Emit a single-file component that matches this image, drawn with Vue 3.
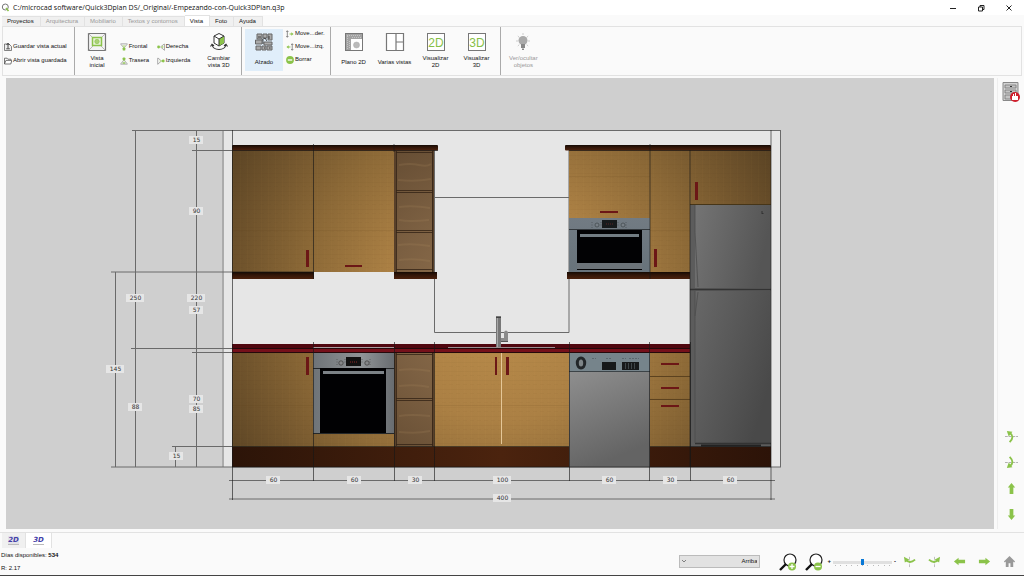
<script setup>
import { ref } from 'vue'

const tabs = [
  { name: 'Proyectos' },
  { name: 'Arquitectura', dim: true },
  { name: 'Mobiliario', dim: true },
  { name: 'Textos y contornos', dim: true },
  { name: 'Vista' },
  { name: 'Foto' },
  { name: 'Ayuda' },
]
const activeTab = ref('Vista')
const viewMode = ref('3D')
const direction = ref('Arriba')
const zoomLevel = ref(50)

const uprights = [313, 394, 434, 569, 649, 690]
const labels = [
  [196, 140, '15'], [196, 211, '90'], [135, 298, '250'], [196, 298, '220'], [196, 310, '57'],
  [115, 369, '145'], [135, 407, '88'], [196, 399, '70'], [196, 409, '85'], [176, 456, '15'],
  [273, 480, '60'], [354, 480, '60'], [415, 480, '30'], [502, 480, '100'], [609, 480, '60'],
  [670, 480, '30'], [730, 480, '60'], [502, 498, '400'],
]
const woods = [
  [232, 150, 81, 122], [313, 150, 81, 122], [569, 150, 81, 68], [650, 150, 40, 122], [690, 150, 81, 55],
  [232, 352, 81, 95], [313, 352, 81, 95], [434, 352, 135, 95], [650, 352, 40, 95],
]
const handles = [
  [306, 250, 3, 17], [345, 265, 17, 2], [600, 211, 18, 2], [654, 249, 3, 18], [695, 182, 3, 18],
  [306, 357, 3, 18], [495, 357, 2, 18], [506, 357, 3, 18],
  [661, 363, 18, 2], [661, 387, 18, 2], [661, 405, 18, 2],
]
</script>

<template>
  <div class="app">
    <header class="title">
      <svg class="logo" viewBox="0 0 9 9"><circle cx="4.3" cy="4" r="3" fill="none" stroke="#777" stroke-width="1" /><path d="M5 5l2.5 3" stroke="#8bc34a" stroke-width="1.6" /></svg>
      <h1>C:/microcad software/Quick3Dplan DS/_Original/-Empezando-con-Quick3DPlan.q3p</h1>
      <div class="window">
        <button aria-label="Minimizar"><svg viewBox="0 0 8 8"><path d="M1 4.5h6" /></svg></button>
        <button aria-label="Restaurar"><svg viewBox="0 0 8 8"><path d="M1.5 3h4v4h-4zM3 3V1.500h4v4H5.500" /></svg></button>
        <button aria-label="Cerrar"><svg viewBox="0 0 8 8"><path d="M1.500 1.500l5 5M6.500 1.500l-5 5" /></svg></button>
      </div>
    </header>

    <nav class="tabs">
      <button v-for="t in tabs" :key="t.name" :class="{ dim: t.dim, on: activeTab === t.name }" @click="activeTab = t.name">{{ t.name }}</button>
    </nav>

    <section class="ribbon">
      <div class="group files">
        <button class="row">
          <svg viewBox="0 0 8 8"><path d="M.5 1v6.500h7V3.500L5 1z" fill="#eee" stroke="#666" stroke-width=".8" /><path d="M4 .3v5M2.500 2l1.500-1.700L5.500 2M2.300 5.800h3.500" fill="none" stroke="#333" stroke-width=".9" /></svg>
          Guardar vista actual
        </button>
        <button class="row">
          <svg viewBox="0 0 8 8"><path d="M.5 7V1.200h2.600l.8 1h3v1.200M.5 7l1.400-3.600h5.900L6.800 7z" fill="#fff" stroke="#555" stroke-width=".8" /></svg>
          Abrir vista guardada
        </button>
      </div>

      <div class="group views">
        <button class="big">
          <svg viewBox="0 0 20 20"><path d="M1.500 1.500h17v17h-17z" fill="#f4f4f4" stroke="#777" stroke-width="1.200" /><path d="M1.500 1.500L6 6M18.500 1.500L14 6M1.500 18.500L6 14M18.500 18.500L14 14" stroke="#aaa" stroke-width=".8" /><rect x="5.500" y="5.500" width="9" height="8" fill="#e9f3da" stroke="#8bc34a" stroke-width="1.500" /><circle cx="10" cy="9.500" r="2.200" fill="#a9d275" stroke="#8bc34a" stroke-width=".6" /></svg>
          <span>Vista<br>inicial</span>
        </button>
        <div class="quad">
          <button class="row">
            <svg viewBox="0 0 9 9"><path d="M.5 1h8M1 1.500L4 5h1l3-3.500" fill="none" stroke="#888" stroke-width=".8" /><path d="M2.500 2.500h4L5 5H4z" fill="#c6e29f" /><rect x="3" y="5" width="3" height="3.500" rx="1" fill="#8bc34a" /></svg>Frontal
          </button>
          <button class="row">
            <svg viewBox="0 0 9 9"><circle cx="1.800" cy="4.500" r="1.600" fill="#8bc34a" /><path d="M8.500 1v7.500M8 1.200L4 4.500l4 3.300" fill="none" stroke="#888" stroke-width=".8" /><circle cx="6" cy="4.500" r="1.300" fill="#b9d98d" /></svg>Derecha
          </button>
          <button class="row">
            <svg viewBox="0 0 9 9"><path d="M.5 8h8M1 7.500L4 4h1l3 3.500" fill="none" stroke="#888" stroke-width=".8" /><rect x="3" y=".5" width="3" height="3.500" rx="1" fill="#8bc34a" /><path d="M3 6h3v1.500H3z" fill="#8bc34a" /></svg>Trasera
          </button>
          <button class="row">
            <svg viewBox="0 0 9 9"><path d="M.8 1v7.500M1.200 1.200L5 4.500 1.200 7.800" fill="none" stroke="#888" stroke-width=".8" /><path d="M3 4.500h3" stroke="#b9d98d" stroke-width="1.500" /><circle cx="7" cy="4.500" r="1.600" fill="#8bc34a" /></svg>Izquierda
          </button>
        </div>
        <button class="big">
          <svg viewBox="0 0 20 20"><path d="M10 1.500l5 2.500v7l-5 3-5-3V4z" fill="#fff" stroke="#333" stroke-width="1" /><path d="M10 7L15 4v7l-5 3z" fill="#8bc34a" /><path d="M5 4l5 3 5-3M10 7v7" fill="none" stroke="#333" stroke-width="1" /><path d="M3 12.500q1 5 7 5t7-5M1.500 14.500L3 12.300l2 1.500M18.500 14.500L17 12.300l-2 1.500" fill="none" stroke="#333" stroke-width="1.100" /></svg>
          <span>Cambiar<br>vista 3D</span>
        </button>
      </div>

      <div class="group elevation">
        <button class="big chosen">
          <svg viewBox="0 0 20 20"><path d="M3 2h5v5H3zM9 2h4v4H9zM14 2h4v6h-4zM1.500 8H8v4H1.500zM10 10h8v3h-8zM2 14h5v4H2zM8 14h4v4H8zM13 14h5v4h-5z" fill="#aaa" stroke="#666" stroke-width="1" /><path d="M8 8l3-2 2 3M4 5h3M15 4v3M10 16h1M15 16h1.500M9 12V8" fill="none" stroke="#333" stroke-width=".9" /></svg>
          <span>Alzado</span>
        </button>
        <div class="stack">
          <button class="row"><svg viewBox="0 0 9 9"><path d="M1.500 1v7M.3 2.200L1.500.8l1.200 1.400M.3 6.800l1.200 1.400 1.200-1.400" fill="none" stroke="#666" stroke-width=".8" /><path d="M4 4h2V2.500l2.500 2L6 6.500V5H4z" fill="#8bc34a" /></svg>Move...der.</button>
          <button class="row"><svg viewBox="0 0 9 9"><path d="M7 1v7M5.800 2.200L7 .8l1.200 1.400M5.800 6.800L7 8.200l1.200-1.400" fill="none" stroke="#666" stroke-width=".8" /><path d="M5 4H3V2.500l-2.500 2L3 6.500V5h2z" fill="#8bc34a" /></svg>Move...izq.</button>
          <button class="row"><svg viewBox="0 0 9 9"><circle cx="4.500" cy="4.500" r="4.400" fill="#8bc34a" /><path d="M2 4.500h5" stroke="#fff" stroke-width="1.500" /></svg>Borrar</button>
        </div>
      </div>

      <div class="group plans">
        <button class="big">
          <svg viewBox="0 0 20 20"><rect x="1.500" y="1.500" width="17" height="17" fill="#fff" stroke="#777" /><path d="M2 2h16v5H7v11H2z" fill="#a2a2a2" /><path d="M3 3.500h14M3.500 4v13M5.500 9v8M8 5.500h9" stroke="#c4c4c4" stroke-dasharray="1 1" /><circle cx="12.500" cy="13" r="3" fill="#bbb" stroke="#aaa" stroke-width=".5" /></svg>
          <span>Plano 2D</span>
        </button>
        <button class="big">
          <svg viewBox="0 0 20 20"><path d="M1.500 1.500h17v17h-17zM11 1.500v17M11 10h7.500" fill="#fff" stroke="#777" stroke-width="1.200" /></svg>
          <span>Varias vistas</span>
        </button>
        <button class="big">
          <svg viewBox="0 0 20 20"><rect x="1.500" y="1.500" width="17" height="17" fill="#fff" stroke="#777" /><text x="10" y="14.500" text-anchor="middle" class="glyph">2D</text></svg>
          <span>Visualizar<br>2D</span>
        </button>
        <button class="big">
          <svg viewBox="0 0 20 20"><rect x="1.500" y="1.500" width="17" height="17" fill="#fff" stroke="#777" /><text x="10" y="14.500" text-anchor="middle" class="glyph">3D</text></svg>
          <span>Visualizar<br>3D</span>
        </button>
      </div>

      <div class="group objects">
        <button class="big faded">
          <svg viewBox="0 0 20 20"><circle cx="10" cy="8.500" r="4.500" fill="#aaa" /><path d="M8 12h4v4H8zM9 16.500h2v1.500H9z" fill="#888" /><path d="M10 1v2M3 9h2M15 9h2M4.800 4l1.500 1.400M15.200 4l-1.500 1.400M4.800 14l1.500-1.400M15.200 14l-1.500-1.400" stroke="#ccc" /></svg>
          <span>Ver/ocultar<br>objetos</span>
        </button>
      </div>
    </section>

    <main class="work">
      <div class="canvas">
        <svg class="scene" viewBox="6 78 988 451" role="img" aria-label="Alzado de la cocina">
          <defs>
            <radialGradient id="wood" gradientUnits="userSpaceOnUse" cx="501" cy="305" r="330">
              <stop offset="0" stop-color="#bb8d4b" /><stop offset=".35" stop-color="#ab8044" /><stop offset=".6" stop-color="#8c6937" /><stop offset="1" stop-color="#523d21" />
            </radialGradient>
            <radialGradient id="shelf" gradientUnits="userSpaceOnUse" cx="501" cy="305" r="220">
              <stop offset="0" stop-color="#967551" /><stop offset=".5" stop-color="#7c6042" /><stop offset="1" stop-color="#5c452d" />
            </radialGradient>
            <linearGradient id="trim" x2="0" y2="1"><stop offset="0" stop-color="#150a04" /><stop offset=".4" stop-color="#301508" /><stop offset="1" stop-color="#4b210d" /></linearGradient>
            <linearGradient id="kick" gradientUnits="userSpaceOnUse" x1="232" x2="771" y1="0" y2="0"><stop offset="0" stop-color="#2c1408" /><stop offset=".5" stop-color="#4b230e" /><stop offset="1" stop-color="#2c1308" /></linearGradient>
            <linearGradient id="steel"><stop offset="0" stop-color="#6e7377" /><stop offset=".6" stop-color="#909497" /><stop offset="1" stop-color="#686c70" /></linearGradient>
            <linearGradient id="oven" x2="0" y2="1"><stop offset="0" stop-color="#727b83" /><stop offset="1" stop-color="#68737b" /></linearGradient>
            <linearGradient id="washer" x2=".3" y2="1"><stop offset="0" stop-color="#969696" /><stop offset="1" stop-color="#646464" /></linearGradient>
            <linearGradient id="fridge" x2="1" y2=".25"><stop offset="0" stop-color="#747474" /><stop offset="1" stop-color="#555" /></linearGradient>
            <linearGradient id="fridgelow" x2="1" y2=".6"><stop offset="0" stop-color="#686868" /><stop offset="1" stop-color="#494949" /></linearGradient>
            <pattern id="grain" width="7" height="9" patternUnits="userSpaceOnUse"><path d="M0 2.500h7M1 6.500h4" stroke="#4a300f" stroke-opacity=".03" /><path d="M2.500 0v9" stroke="#f4c878" stroke-opacity=".02" /></pattern>
          </defs>

          <rect x="224" y="130" width="557" height="337" fill="#e6e6e6" />
          <rect x="222" y="130" width="2" height="337" fill="#ababab" />

          <g stroke="#6a6a6a" fill="none">
            <path d="M132 130.500h649M192 150.500h40M111 272h121M131 348.500h101M192 352.500h40M172 446.500h60M111 467h670" />
            <path d="M115.500 272v195M135.500 130v337M196.500 130v337M175.500 447v20" />
            <path d="M229 480.500h546M229 499h546M434 197.500h135M434.500 150v182.500h134.500V150M780.500 130v337" />
          </g>

          <g v-for="(w, i) in woods" :key="'w' + i">
            <rect :x="w[0]" :y="w[1]" :width="w[2]" :height="w[3]" fill="url(#wood)" />
            <rect :x="w[0]" :y="w[1]" :width="w[2]" :height="w[3]" fill="url(#grain)" />
          </g>
          <path d="M232 230.500h162M569 176.500h81M650 230.500h40M232 405.500h81M434 405.500h135" stroke="#5a3b14" stroke-opacity=".1" />

          <g>
            <rect x="394" y="150" width="40" height="122" fill="url(#shelf)" />
            <rect x="394" y="352" width="40" height="95" fill="url(#shelf)" />
            <path d="M395 150v122M433 150v122M395 352v95M433 352v95" stroke="#58402a" stroke-width="2" />
            <path d="M396.500 151v121M432.500 151v121M396 152.500h37M396 190.500h37M396 192.500h37M396 230.500h37M396 232.500h37M396 269.500h37M396.500 353v93M432.500 353v93M396 354.500h37M396 398.500h37M396 400.500h37M396 444.500h37" stroke="#332315" fill="none" stroke-width=".8" />
            <path d="M399 165q12-2 20 0t12-1M398 180q18 2 33-1M399 207q14-2 31 1M399 220q10 2 30 0M398 245q14-2 32 1M399 260q15-2 31 1M399 370q15-2 31 1M399 386q18-2 30 1M399 416q12-2 31 0M399 432q18 2 31-1" fill="none" stroke="#b08e62" stroke-opacity=".18" stroke-width="2" />
          </g>

          <rect x="232" y="145" width="206" height="5.500" rx="1" fill="url(#trim)" />
          <rect x="565" y="145" width="206" height="5.500" rx="1" fill="url(#trim)" />
          <path d="M232 272h82v7h-82zM394 272h43v7h-43zM567 272h123v7H567z" fill="url(#trim)" />
          <rect x="232" y="447" width="539" height="20" fill="url(#kick)" />

          <g>
            <rect x="569" y="218" width="81" height="54" fill="url(#oven)" />
            <path d="M569 229.500h81" stroke="#33383c" />
            <rect x="577" y="230" width="65" height="40" fill="#020204" />
            <rect x="577" y="263" width="65" height="6" fill="#6d747a" />
            <rect x="580" y="234" width="59" height="3" fill="#727c83" />
            <rect x="602" y="220" width="15" height="8" fill="#171a1c" />
            <path d="M606 224h7" stroke="#5b2424" stroke-dasharray="1 1" />
            <g fill="#777f86" stroke="#454c51" stroke-width=".8"><circle cx="597" cy="225" r="2" /><circle cx="623" cy="225" r="2" /></g>
            <path d="M592 222v6M601 222v5M618 222v5M626 222v6" stroke="#3f464a" stroke-width=".6" stroke-dasharray="1 1.500" />
          </g>

          <g>
            <rect x="313" y="352" width="81" height="82" fill="url(#steel)" />
            <path d="M313 368.500h81M313 433.500h81" stroke="#25282a" />
            <rect x="320" y="368" width="66" height="65" fill="#010103" />
            <rect x="323" y="371" width="61" height="3" fill="#7c8287" />
            <rect x="346" y="357" width="15" height="9" fill="#111" />
            <path d="M350 362h7" stroke="#8c2929" stroke-dasharray="1 1" />
            <g fill="#858789" stroke="#444" stroke-width=".8"><circle cx="341" cy="363" r="2.200" /><circle cx="367" cy="363" r="2.200" /></g>
            <path d="M337 359v7M345 359v4M362 359v4M370 359v7" stroke="#444" stroke-width=".6" stroke-dasharray="1 1.500" />
          </g>

          <rect x="232" y="344" width="458" height="8" fill="#50070f" />
          <rect x="232" y="349" width="458" height="3" fill="#75101a" />
          <path d="M232 348.500h458M232 352.500h458" stroke="#25090b" />
          <path d="M313 347.500h81" stroke="#a99b9d" /><path d="M448 347.500h107" stroke="#9b8d90" />
          <path d="M501.500 353v91" stroke="#e5c798" />

          <g>
            <rect x="496" y="316" width="5" height="31" fill="#777" />
            <path d="M497.500 317v30" stroke="#a6a6a6" /><path d="M496 317.500h5" stroke="#444" />
            <path d="M501 338h3v-6q2-3 4 0v9h-7z" fill="#8b8b8b" /><path d="M501 341.500h7" stroke="#555" />
          </g>

          <g>
            <rect x="569" y="353" width="81" height="114" fill="url(#washer)" />
            <rect x="569" y="353" width="81" height="18" fill="#76848b" />
            <path d="M569 371.500h81" stroke="#3c4347" />
            <ellipse cx="581" cy="363" rx="3.700" ry="5" fill="#7e8588" stroke="#222629" stroke-width="3" />
            <rect x="602" y="362" width="14" height="8" fill="#17191a" />
            <rect x="622" y="362" width="17" height="8" fill="#17191a" />
            <path d="M625.500 363v6M628.500 363v6M631.500 363v6M634.500 363v6" stroke="#4a5256" stroke-width=".8" />
            <path d="M592 358.500h4M606 358.500h6M622 358.500h4M629 358.500h10" stroke="#5c676e" stroke-dasharray="2 1" />
          </g>

          <g>
            <rect x="690" y="205" width="81" height="242" fill="#5c5c5c" />
            <rect x="695" y="205" width="75" height="83" fill="url(#fridge)" />
            <rect x="695" y="291" width="75" height="152" fill="url(#fridgelow)" />
            <path d="M690 289.500h81M695 443.500h76" stroke="#333" stroke-width="1.500" />
            <path d="M690 204.500h81" stroke="#463518" />
            <path d="M695 205v27l3 55M695 291v152M698 292l-3 24" stroke="#4c4c4c" fill="none" stroke-width=".8" />
            <path d="M701 445.500h60" stroke="#222" stroke-width="2" />
            <path d="M762 211v2M761.500 213.500h2" stroke="#333" />
          </g>

          <path d="M650 376.500h40M650 399.500h40" stroke="#5c421f" />
          <rect v-for="(h, i) in handles" :key="'h' + i" :x="h[0]" :y="h[1]" :width="h[2]" :height="h[3]" fill="#6c1716" />

          <g stroke="#171717" stroke-opacity=".62" fill="none">
            <path d="M232.500 130v370M771 130v370" />
            <path v-for="x in uprights" :key="x" :d="`M${x + .5} 342v139`" />
            <path d="M313.500 144v135M394 144v8M650 144v135M690 150v317M232 150.500h206M569 150.500h202M232 446.500h337M650 446.500h121M232 467h539M232 272h82" />
          </g>

          <g v-for="(l, i) in labels" :key="'l' + i">
            <rect :x="l[0] - (l[2].length > 2 ? 9 : 7)" :y="l[1] - 4" :width="l[2].length > 2 ? 18 : 14" height="8" fill="#e6e6e6" />
            <text :x="l[0] + .5" :y="l[1] + 2" class="dim-text">{{ l[2] }}</text>
          </g>
        </svg>
      </div>

      <aside class="side">
        <button aria-label="Mueble"><svg class="cabinet" viewBox="0 0 20 22"><path d="M2 1.500h15v18H2z" fill="#d2d2d2" stroke="#888" /><path d="M4 4h11v3H4zM4 9h11v3H4zM4 14h11v4H4z" fill="#c4c4c4" stroke="#777" stroke-width=".8" /><path d="M9 5.500h2M9 10.500h2" stroke="#333" /><circle cx="14" cy="16" r="5" fill="#cf1f2d" /><path d="M11 15h6v4h-6zM12 15v-2h1v2M14 15v-3h1v3" fill="#fff" /></svg></button>
        <div class="orbit">
          <button aria-label="Girar arriba"><svg viewBox="0 0 14 14"><path d="M0 7h14" stroke="#999" stroke-width=".8" stroke-dasharray="3 1" /><path d="M5 3q6 4 0 10" fill="none" stroke="#8bc34a" stroke-width="2" /><path d="M2 1l6 1-4 5z" fill="#8bc34a" /></svg></button>
          <button aria-label="Girar abajo"><svg viewBox="0 0 14 14"><path d="M0 7h14" stroke="#999" stroke-width=".8" stroke-dasharray="3 1" /><path d="M5 1q6 6 0 10" fill="none" stroke="#8bc34a" stroke-width="2" /><path d="M2 13l6-1-4-5z" fill="#8bc34a" /></svg></button>
          <button aria-label="Subir"><svg viewBox="0 0 14 14"><path d="M7 1l4 5H9v7H5V6H3z" fill="#8bc34a" /></svg></button>
          <button aria-label="Bajar"><svg viewBox="0 0 14 14"><path d="M7 13l4-5H9V1H5v7H3z" fill="#8bc34a" /></svg></button>
        </div>
      </aside>
    </main>

    <nav class="modes">
      <button v-for="m in ['2D', '3D']" :key="m" :class="{ on: viewMode === m }" @click="viewMode = m"><span>{{ m }}</span></button>
    </nav>

    <footer class="status">
      <div class="info">
        <p>Días disponibles: <b>534</b></p>
        <p>R: 2.17</p>
      </div>
      <div class="tools">
        <label class="pick">
          <select v-model="direction" aria-label="Dirección"><option>Arriba</option></select>
          <svg viewBox="0 0 6 6"><path d="M1 2l2 2 2-2" fill="none" stroke="#666" stroke-width=".8" /></svg>
        </label>
        <div class="zoom">
          <button aria-label="Acercar"><svg viewBox="0 0 18 18"><circle cx="11" cy="7" r="6" fill="#fff" stroke="#222" stroke-width="1.200" /><path d="M7 11l-6 6" stroke="#111" stroke-width="2.400" /><circle cx="13" cy="13.500" r="4" fill="#8bc34a" /><path d="M10.500 13.500h5M13 11v5" stroke="#fff" stroke-width="1.300" /></svg></button>
          <button aria-label="Alejar"><svg viewBox="0 0 18 18"><circle cx="11" cy="7" r="6" fill="#fff" stroke="#222" stroke-width="1.200" /><path d="M7 11l-6 6" stroke="#111" stroke-width="2.400" /><circle cx="13" cy="13.500" r="4" fill="#8bc34a" /><path d="M10.500 13.500h5" stroke="#fff" stroke-width="1.300" /></svg></button>
        </div>
        <div class="slider">
          <b>+</b>
          <div class="track">
            <input v-model="zoomLevel" type="range" min="0" max="100" aria-label="Zoom">
            <div class="ticks"><i v-for="n in 11" :key="n"></i></div>
          </div>
          <b>-</b>
        </div>
        <div class="moves">
          <button aria-label="Girar izquierda"><svg viewBox="0 0 14 14"><path d="M7 2v11" stroke="#aaa" stroke-width=".8" stroke-dasharray="3 1" /><path d="M3 5q4 5 10 0" fill="none" stroke="#8bc34a" stroke-width="2" /><path d="M1 2l1 6 5-3z" fill="#8bc34a" /></svg></button>
          <button aria-label="Girar derecha"><svg viewBox="0 0 14 14"><path d="M7 2v11" stroke="#aaa" stroke-width=".8" stroke-dasharray="3 1" /><path d="M11 5q-4 5-10 0" fill="none" stroke="#8bc34a" stroke-width="2" /><path d="M13 2l-1 6-5-3z" fill="#8bc34a" /></svg></button>
          <button aria-label="Izquierda"><svg viewBox="0 0 14 14"><path d="M1 7l5-4v2h7v4H6v2z" fill="#8bc34a" /></svg></button>
          <button aria-label="Derecha"><svg viewBox="0 0 14 14"><path d="M13 7L8 3v2H1v4h7v2z" fill="#8bc34a" /></svg></button>
          <button aria-label="Inicio"><svg viewBox="0 0 14 14"><path d="M7 1l6 6-1 1-1-1v6H8V9H6v4H3V7L2 8 1 7z" fill="#999" /></svg></button>
        </div>
      </div>
    </footer>
  </div>
</template>

<style>
body { background: #fafafa; }
</style>

<style scoped>
.app { box-sizing: border-box; min-height: 100vh; display: flex; flex-direction: column; background: #fafafa; border-bottom: 1px solid #444; font: 6px/9px "Liberation Sans", Arial, sans-serif; color: #111; }
button { border: 0; margin: 0; padding: 0; background: none; font: inherit; color: inherit; }
svg { display: block; flex: none; }
h1, p { margin: 0; }

.title { display: flex; align-items: center; gap: 3px; height: 15px; padding: 0 11px 0 1px; background: #fff; box-sizing: border-box; }
.logo { width: 9px; height: 9px; }
.title h1 { font: 400 7px/14px "Open Sans", "Noto Sans", sans-serif; flex: 1; }
.window { display: flex; gap: 20px; }
.window svg { width: 8px; height: 8px; fill: none; stroke: #222; stroke-width: 1; }

.tabs { display: flex; align-items: flex-end; height: 11px; padding: 0 2px; }
.tabs button { height: 10px; padding: 0 6px 0 5px; background: #f0f0f0; border: 1px solid #e2e2e2; border-width: 1px 1px 0 0; }
.tabs .dim { color: #999; }
.tabs .on { height: 11px; background: #fff; }

.ribbon { display: flex; height: 50px; margin: 0 2px; box-sizing: border-box; border: 1px solid #e2e2e2; }
.group { display: flex; align-items: flex-start; border-right: 1px solid #aaa; box-sizing: border-box; line-height: 7px; }
.group:last-child { border-right: 0; }
.row { display: flex; align-items: center; gap: 1px; height: 9px; white-space: nowrap; }
.row svg { width: 8px; height: 8px; }
.big { display: flex; flex-direction: column; align-items: center; white-space: nowrap; height: 42px; padding-top: 3px; gap: 3px; box-sizing: border-box; }
.big svg { width: 20px; height: 20px; }
.big span { display: flex; min-height: 14px; flex-direction: column; justify-content: center; }
.files { width: 72px; padding: 15px 0 0 1px; flex-direction: column; gap: 5px; }
.views { width: 167px; padding: 2px 11px 0 12px; justify-content: space-between; }
.quad { display: grid; grid-template-columns: 37px 38px; row-gap: 5px; padding-top: 13px; }
.elevation { width: 89px; padding: 2px 0 0 3px; gap: 3px; }
.chosen { width: 38px; background: #e0eefa; }
.stack { display: flex; flex-direction: column; gap: 4px; }
.plans { display: grid; grid-template-columns: repeat(4, 41px); width: 170px; padding: 2px 0 0 2px; }
.objects { padding: 2px 8px; }
.faded { color: #999; }
.glyph { font: 12px "Liberation Sans", sans-serif; fill: #86bf47; }

.work { flex: 1; display: flex; min-height: 0; padding: 2px 0 0 6px; }
.canvas { flex: 1; display: flex; min-width: 0; background: #cfcfcf; }
.scene { flex: 1; width: 100%; min-width: 0; }
.dim-text { font: 6px "DejaVu Sans", sans-serif; text-anchor: middle; fill: #333; }
.side { width: 27px; margin-left: 3px; border-left: 1px solid #eee; display: flex; flex-direction: column; align-items: center; justify-content: space-between; padding: 3px 0 8px; box-sizing: border-box; }
.cabinet { width: 20px; height: 22px; }
.orbit { display: flex; flex-direction: column; gap: 13px; }
.orbit svg, .moves svg { width: 13px; height: 13px; }

.modes { display: flex; height: 15px; margin-top: 3px; padding-left: 2px; border-top: 1px solid #e2e2e2; }
.modes button { width: 24px; background: #f0f0f0; border-right: 1px solid #e2e2e2; }
.modes .on { background: #fff; width: 26px; }
.modes span { font: italic 700 7px/8px "DejaVu Sans", sans-serif; color: #4340a8; background: #e2e2e8; border-bottom: 1px solid #bbb; }
.modes .on span { background: #fff; }

.status { display: flex; justify-content: space-between; height: 27px; padding: 0 8px 0 1px; }
.info { display: flex; flex-direction: column; gap: 4px; padding-top: 3px; }
.tools { display: flex; align-items: center; }
.pick { position: relative; width: 81px; margin-right: 19px; }
.pick select { display: block; width: 100%; height: 13px; padding: 0 2px; border: 1px solid #bbb; border-radius: 0; background: #e2e2e2; appearance: none; font: inherit; color: #111; text-align-last: right; }
.pick svg { position: absolute; left: 2px; top: 3px; width: 6px; height: 6px; }
.zoom { display: flex; gap: 8px; }
.zoom svg { width: 18px; height: 18px; }
.slider { display: flex; align-items: center; gap: 2px; margin: 0 7px 0 4px; }
.track { width: 59px; }
.track input { display: block; appearance: none; width: 100%; height: 6px; margin: 2px 0 0; background: linear-gradient(#e0e0e0, #e0e0e0) center / 100% 3px no-repeat; }
.track input::-webkit-slider-thumb { appearance: none; width: 3px; height: 6px; background: #0878d6; }
.ticks { display: flex; justify-content: space-between; padding: 0 2px; }
.ticks i { width: 1px; height: 1px; background: #bbb; }
.moves { display: flex; gap: 12px; }
</style>
